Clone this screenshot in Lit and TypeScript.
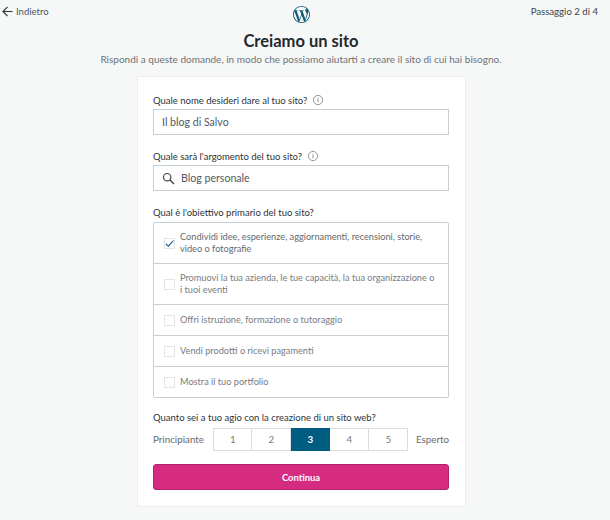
import { LitElement, html, css, svg } from 'lit';
import { customElement } from 'lit/decorators.js';

const goals = [
  'Condividi idee, esperienze, aggiornamenti, recensioni, storie, video o fotografie',
  'Promuovi la tua azienda, le tue capacità, la tua organizzazione o i tuoi eventi',
  'Offri istruzione, formazione o tutoraggio',
  'Vendi prodotti o ricevi pagamenti',
  'Mostra il tuo portfolio',
];

const infoIcon = svg`<svg class="info" viewBox="0 0 12 12"><circle cx="6" cy="6" r="4.6" fill="none" stroke="#787c82" stroke-width=".8"/><path d="M6 5.2v3M6 3.6v.9" stroke="#787c82" stroke-width=".9"/></svg>`;

@customElement('app-root')
export class AppRoot extends LitElement {
  static styles = css`
    :host {
      display: block;
      height: 520px;
      overflow: hidden;
      background: #f6f7f7;
      font-family: Lato, 'Noto Sans', sans-serif;
      color: #2c3338;
    }
    .top {
      display: grid;
      grid-template-columns: 1fr auto 1fr;
      height: 30px;
      padding: 5px 12px 0 2px;
      box-sizing: border-box;
    }
    .back {
      display: flex;
      align-items: center;
      gap: 3px;
      height: 12px;
      font-size: 9.5px;
      color: #50575e;
    }
    .back svg { width: 11px; height: 11px; }
    .logo { width: 17px; height: 17px; margin-top: 1px; margin-left: 2px; }
    .step {
      justify-self: end;
      font-size: 9.6px;
      line-height: 14px;
      color: #3c434a;
    }
    h1 {
      margin: 0;
      padding-right: 8px;
      text-align: center;
      font-size: 16.5px;
      line-height: 22px;
      font-weight: 700;
      color: #23282d;
    }
    .sub {
      margin: 0;
      height: 25px;
      padding-right: 8px;
      box-sizing: border-box;
      text-align: center;
      font-size: 10px;
      line-height: 14px;
      color: #6c7278;
    }
    .card {
      width: 327px;
      height: 429px;
      margin-left: 138px;
      padding: 15px 16px 15px 15px;
      box-sizing: border-box;
      background: #fff;
      box-shadow: 0 0 0 1px #eceded;
    }
    .label {
      display: flex;
      align-items: center;
      gap: 5px;
      height: 16px;
      font-size: 9.5px;
      color: #2c3338;
    }
    .info { width: 12px; height: 12px; }
    .input {
      display: flex;
      align-items: center;
      gap: 6px;
      height: 26px;
      margin: 1px 0 13px;
      padding: 0 8px;
      border: 1px solid #c9ced2;
      box-sizing: border-box;
      font-size: 10.6px;
      color: #50575e;
    }
    .input svg { width: 13px; height: 13px; }
    .goals {
      margin-top: 2px;
      border: 1px solid #c9ced2;
      border-radius: 2px;
    }
    .goal {
      display: flex;
      align-items: center;
      gap: 5px;
      height: 31px;
      padding: 0 10px;
      box-sizing: border-box;
      font-size: 9.2px;
      line-height: 12px;
      color: #787c82;
      border-top: 1px solid #c9ced2;
    }
    .goal.tall { height: 41px; }
    .goal.tall:first-child { border-top: 0; height: 40px; }
    .goal.on { color: #646970; }
    .box {
      flex: none;
      width: 11px;
      height: 11px;
      border: 1px solid #e2e4e6;
      box-sizing: border-box;
      display: flex;
    }
    .box svg { width: 11px; height: 11px; margin: -1px; }
    .ease { margin-top: 11px; }
    .scale {
      display: flex;
      align-items: center;
      justify-content: space-between;
      height: 24px;
      margin-top: 2px;
      font-size: 9.8px;
      color: #646970;
    }
    .nums { display: flex; margin-left: 2px; }
    .num {
      width: 39px;
      height: 23px;
      display: flex;
      align-items: center;
      justify-content: center;
      border: 1px solid #dcdcde;
      border-left: 0;
      box-sizing: border-box;
      background: #fff;
      color: #787c82;
    }
    .num:first-child { border-left: 1px solid #dcdcde; }
    .num.on { background: #005d82; border-color: #005d82; color: #fff; font-weight: 700; }
    button {
      display: block;
      width: 100%;
      height: 26px;
      margin-top: 13px;
      padding: 0;
      background: #d52c82;
      border: 1px solid #b0216c;
      border-radius: 3px;
      color: #fff;
      font: 700 9.4px Lato, 'Noto Sans', sans-serif;
    }
  `;

  render() {
    return html`
      <div class="top">
        <div class="back">
          <svg viewBox="0 0 12 12"><path d="M11.5 6H1.2M6 1 1 6l5 5" fill="none" stroke="#2c3338" stroke-width="1.2"/></svg>
          Indietro
        </div>
        <svg class="logo" viewBox="0 0 24 24"><path fill="#135e7c" d="M21.469 6.825c.84 1.537 1.318 3.3 1.318 5.175 0 3.979-2.156 7.456-5.363 9.325l3.295-9.527c.615-1.54.82-2.771.82-3.864 0-.405-.026-.78-.07-1.11m-7.981.105c.647-.03 1.232-.105 1.232-.105.582-.075.514-.93-.067-.899 0 0-1.755.135-2.88.135-1.064 0-2.85-.15-2.85-.15-.585-.03-.661.855-.075.885 0 0 .54.061 1.125.09l1.68 4.605-2.37 7.08L5.354 6.9c.649-.03 1.234-.1 1.234-.1.585-.075.516-.93-.065-.896 0 0-1.746.138-2.874.138-.2 0-.438-.008-.69-.015C4.911 3.15 8.235 1.215 12 1.215c2.809 0 5.365 1.072 7.286 2.833-.046-.003-.091-.009-.141-.009-1.06 0-1.812.923-1.812 1.914 0 .89.513 1.643 1.06 2.531.411.72.89 1.643.89 2.977 0 .915-.354 1.994-.821 3.479l-1.075 3.585-3.9-11.61.001.014zM12 22.784c-1.059 0-2.081-.153-3.048-.437l3.237-9.406 3.315 9.087c.024.053.05.101.078.149-1.12.393-2.325.609-3.582.609M1.211 12c0-1.564.336-3.05.935-4.39L7.29 21.709C3.694 19.96 1.212 16.271 1.211 12M12 0C5.385 0 0 5.385 0 12s5.385 12 12 12 12-5.385 12-12S18.615 0 12 0"/></svg>
        <div class="step">Passaggio 2 di 4</div>
      </div>
      <h1>Creiamo un sito</h1>
      <p class="sub">Rispondi a queste domande, in modo che possiamo aiutarti a creare il sito di cui hai bisogno.</p>
      <div class="card">
        <div class="label">Quale nome desideri dare al tuo sito? ${infoIcon}</div>
        <div class="input">Il blog di Salvo</div>
        <div class="label">Quale sarà l'argomento del tuo sito? ${infoIcon}</div>
        <div class="input">
          <svg viewBox="0 0 13 13"><circle cx="5.2" cy="5.2" r="3.7" fill="none" stroke="#3c434a" stroke-width="1.2"/><path d="m8 8 4 4" stroke="#3c434a" stroke-width="1.4"/></svg>
          Blog personale
        </div>
        <div class="label">Qual è l'obiettivo primario del tuo sito?</div>
        <div class="goals">
          ${goals.map((g, i) => html`
            <div class="goal ${i < 2 ? 'tall' : ''} ${i === 0 ? 'on' : ''}">
              <span class="box">
                ${i === 0 ? html`<svg viewBox="0 0 11 11"><path d="m2 6 2.4 2.2L9.5 2.5" fill="none" stroke="#135e7c" stroke-width="1.1"/></svg>` : ''}
              </span>
              <span>${g}</span>
            </div>
          `)}
        </div>
        <div class="label ease">Quanto sei a tuo agio con la creazione di un sito web?</div>
        <div class="scale">
          <span>Principiante</span>
          <div class="nums">
            ${[1, 2, 3, 4, 5].map(n => html`<div class="num ${n === 3 ? 'on' : ''}">${n}</div>`)}
          </div>
          <span>Esperto</span>
        </div>
        <button>Continua</button>
      </div>
    `;
  }
}
